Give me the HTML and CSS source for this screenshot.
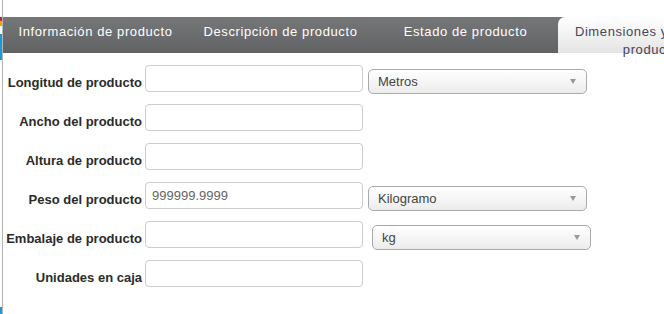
FILE: index.html
```html
<!DOCTYPE html>
<html>
<head>
    <title>Dimensiones y peso del producto</title>
    <link rel="stylesheet" href="styles.css">
</head>
<body>
    <div class="page">
        <div class="side">
            <span class="side-red"></span>
            <span class="side-orange"></span>
            <span class="side-white"></span>
            <span class="side-blue"></span>
            <span class="side-end"></span>
        </div>
        <div class="main">
            <ul class="tabs">
                <li class="tab">Información de producto</li>
                <li class="tab">Descripción de producto</li>
                <li class="tab">Estado de producto</li>
                <li class="tab active">Dimensiones y peso del producto</li>
            </ul>
            <form class="dims">
                <div class="row">
                    <label for="longitud">Longitud de producto</label>
                    <input type="text" id="longitud">
                    <div class="select"><span>Metros</span><i class="arrow"></i></div>
                </div>
                <div class="row">
                    <label for="ancho">Ancho del producto</label>
                    <input type="text" id="ancho">
                </div>
                <div class="row">
                    <label for="altura">Altura de producto</label>
                    <input type="text" id="altura">
                </div>
                <div class="row">
                    <label for="peso">Peso del producto</label>
                    <input type="text" id="peso" value="999999.9999">
                    <div class="select"><span>Kilogramo</span><i class="arrow"></i></div>
                </div>
                <div class="row">
                    <label for="embalaje">Embalaje de producto</label>
                    <input type="text" id="embalaje">
                    <div class="select wide-gap"><span>kg</span><i class="arrow"></i></div>
                </div>
                <div class="row">
                    <label for="unidades">Unidades en caja</label>
                    <input type="text" id="unidades">
                </div>
            </form>
        </div>
    </div>
</body>
</html>
```

FILE: styles.css
```css
body {
    font-family: "Liberation Sans", Arial, sans-serif;
    margin: 0;
    background: #fff;
    overflow: hidden;
}
.page {
    display: flex;
    height: 314px;
}
.side {
    width: 2px;
    display: flex;
    flex-direction: column;
    padding-top: 17px;
    border-right: 1px solid #b4b4b4;
}
.side span {
    display: block;
}
.side-red {
    height: 4px;
    background: #c8232c;
}
.side-orange {
    height: 5px;
    background: #f0a800;
}
.side-white {
    height: 8px;
    background: #fff;
}
.side-blue {
    height: 26px;
    background: #1a9ad6;
}
.side-end {
    margin-top: auto;
    height: 7px;
    background: #1a9ad6;
}
.main {
    flex: 1;
    min-width: 0;
}
.tabs {
    list-style: none;
    margin: 17px 0 0 0;
    padding: 0;
    display: flex;
    height: 36px;
    background: linear-gradient(#767779, #616264);
    overflow: visible;
}
.tab {
    flex: 0 0 185px;
    box-sizing: border-box;
    padding: 6px 12px 0;
    font-size: 13px;
    line-height: 18px;
    letter-spacing: 0.6px;
    color: #fff;
    text-align: center;
}
.tab.active {
    background: linear-gradient(#ffffff, #e4e4e4);
    color: #45455a;
    border-top-left-radius: 7px;
}
.dims {
    padding-top: 12px;
}
.row {
    display: flex;
    align-items: flex-start;
    height: 39px;
}
.row label {
    width: 139px;
    margin-right: 3px;
    padding-top: 4px;
    text-align: right;
    font-size: 13px;
    font-weight: bold;
    line-height: 27px;
    color: #2b2b2b;
}
.row input {
    width: 218px;
    height: 27px;
    box-sizing: border-box;
    border: 1px solid #ccc;
    border-radius: 4px;
    padding: 0 6px;
    font-family: "Liberation Sans", Arial, sans-serif;
    font-size: 13px;
    color: #666;
    outline: none;
}
.select {
    width: 219px;
    height: 25px;
    box-sizing: border-box;
    margin: 4px 0 0 5px;
    border: 1px solid #aaa;
    border-radius: 5px;
    background: linear-gradient(#ffffff, #ececec);
    display: flex;
    align-items: center;
    justify-content: space-between;
    padding: 0 10px 0 9px;
    font-size: 13px;
    color: #444;
}
.select.wide-gap {
    margin-left: 9px;
}
.arrow {
    width: 0;
    height: 0;
    border-left: 3.5px solid transparent;
    border-right: 3.5px solid transparent;
    border-top: 5px solid #999;
}
```
